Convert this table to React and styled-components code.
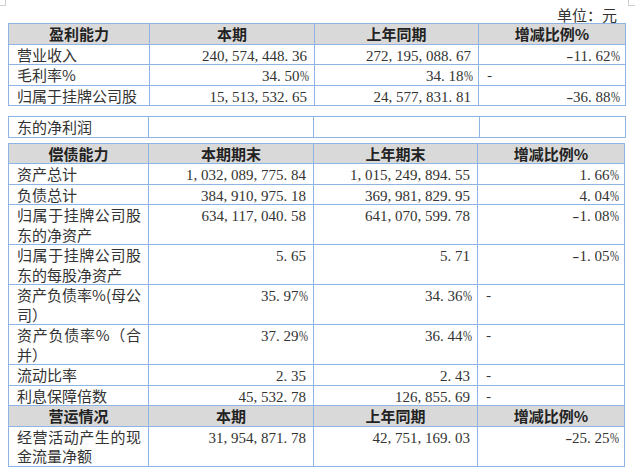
import React from 'react';
import styled, { createGlobalStyle } from 'styled-components';

const GlobalStyle = createGlobalStyle`
  html, body { margin: 0; padding: 0; background: #fff; }
  body {
    font-family: "Noto Sans CJK SC", "Liberation Serif", sans-serif;
    color: #333;
  }
`;

const Page = styled.div`
  position: relative;
  width: 635px;
  height: 470px;
  overflow: hidden;
  box-sizing: border-box;
  padding: 5px 10px 0 8px;
`;

const CropMark = styled.span`
  position: absolute;
  top: 0;
  height: 5px;
  border-bottom: 1px solid #cfcfcf;
  ${(p) =>
    p.$side === 'left'
      ? 'left: 0; width: 5px; border-right: 1px solid #cfcfcf;'
      : 'left: 628px; width: 7px; border-left: 1px solid #cfcfcf;'}
`;

const Unit = styled.div`
  height: 18px;
  line-height: 20px;
  font-size: 15px;
  text-align: right;
  padding-right: 8px;
  color: #333;
`;

const Table = styled.table`
  border-collapse: collapse;
  table-layout: fixed;
  width: ${(p) => p.$width}px;
  margin-top: ${(p) => p.$gap}px;
  font-size: 15px;
  line-height: 19.5px;
`;

const Cell = styled.td`
  border: 1px solid #8db4e2;
  padding: 0 7px 0 8px;
  vertical-align: top;
  text-align: ${(p) => p.$align || 'left'};
  color: #333;
  overflow: hidden;
`;

const HeadCell = styled.th`
  border: 1px solid #8db4e2;
  padding: 0 4px;
  background: #d9d9d9;
  font-weight: 700;
  text-align: center;
  vertical-align: top;
  color: #222;
`;

const NumText = styled.span`
  font-family: "Liberation Serif", serif;
  white-space: nowrap;
  line-height: 1;
`;

const Punct = styled.span`
  display: inline-block;
  width: 7.5px;
  line-height: 1;
  text-align: ${(p) => (p.$c === '-' ? 'center' : 'left')};
  ${(p) => (p.$c === '-' ? 'transform: scaleX(1.4);' : '')}
  ${(p) => (p.$c === '%' ? 'transform: scaleX(0.72); transform-origin: left center;' : '')}
`;

const Num = ({ v }) => (
  <NumText>
    {v.split(/([,.\-%])/).map((part, i) =>
      /^[,.\-%]$/.test(part) ? (
        <Punct key={i} $c={part}>
          {part}
        </Punct>
      ) : (
        part
      )
    )}
  </NumText>
);

const renderValue = (v) => {
  if (v === '') return <Cell />;
  if (v === '-') return <Cell $align="left">-</Cell>;
  return (
    <Cell $align="right">
      <Num v={v} />
    </Cell>
  );
};

const DataTable = ({ cols, gap, rows }) => {
  const width = cols.reduce((a, b) => a + b, 0);
  return (
    <Table $width={width} $gap={gap}>
      <colgroup>
        {cols.map((w, i) => (
          <col key={i} style={{ width: w }} />
        ))}
      </colgroup>
      <tbody>
        {rows.map((r, i) =>
          r.head ? (
            <tr key={i}>
              {r.cells.map((c, j) => (
                <HeadCell key={j}>{c}</HeadCell>
              ))}
            </tr>
          ) : (
            <tr key={i}>
              <Cell $align="justify">{r.cells[0]}</Cell>
              {renderValue(r.cells[1])}
              {renderValue(r.cells[2])}
              {renderValue(r.cells[3])}
            </tr>
          )
        )}
      </tbody>
    </Table>
  );
};

const H = (...cells) => ({ head: true, cells });
const R = (...cells) => ({ head: false, cells });

const table1 = [
  H('盈利能力', '本期', '上年同期', '增减比例%'),
  R('营业收入', '240,574,448.36', '272,195,088.67', '-11.62%'),
  R('毛利率%', '34.50%', '34.18%', '-'),
  R('归属于挂牌公司股', '15,513,532.65', '24,577,831.81', '-36.88%'),
];

const table2 = [R('东的净利润', '', '', '')];

const table3 = [
  H('偿债能力', '本期期末', '上年期末', '增减比例%'),
  R('资产总计', '1,032,089,775.84', '1,015,249,894.55', '1.66%'),
  R('负债总计', '384,910,975.18', '369,981,829.95', '4.04%'),
  R('归属于挂牌公司股东的净资产', '634,117,040.58', '641,070,599.78', '-1.08%'),
  R('归属于挂牌公司股东的每股净资产', '5.65', '5.71', '-1.05%'),
  R('资产负债率%(母公司）', '35.97%', '34.36%', '-'),
  R('资产负债率%（合并）', '37.29%', '36.44%', '-'),
  R('流动比率', '2.35', '2.43', '-'),
  R('利息保障倍数', '45,532.78', '126,855.69', '-'),
  H('营运情况', '本期', '上年同期', '增减比例%'),
  R('经营活动产生的现金流量净额', '31,954,871.78', '42,751,169.03', '-25.25%'),
];

export default function App() {
  return (
    <>
      <GlobalStyle />
      <Page>
        <CropMark $side="left" />
        <CropMark $side="right" />
        <Unit>单位：元</Unit>
        <DataTable cols={[141, 165, 164, 147]} gap={0} rows={table1} />
        <DataTable cols={[140, 165, 166, 146]} gap={10} rows={table2} />
        <DataTable cols={[140, 165, 164, 147]} gap={5} rows={table3} />
      </Page>
    </>
  );
}
